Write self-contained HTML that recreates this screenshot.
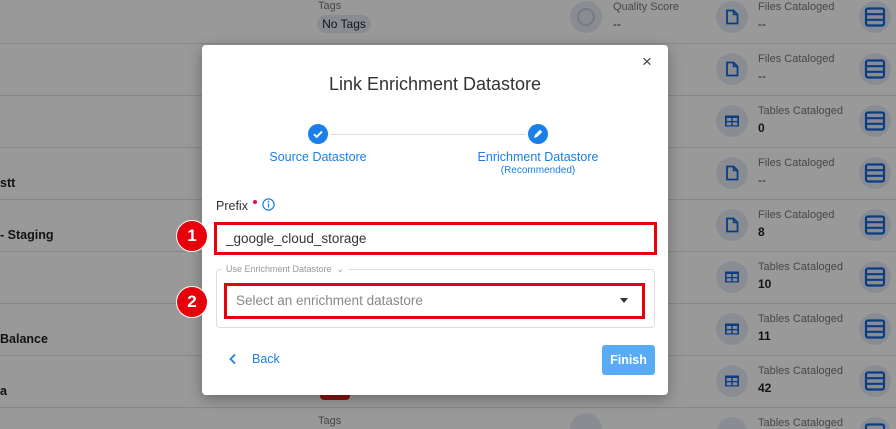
<!DOCTYPE html>
<html><head><meta charset="utf-8"><style>
*{box-sizing:border-box;margin:0;padding:0}
html,body{width:896px;height:429px;overflow:hidden}
body{background:#fff;font-family:"Liberation Sans",sans-serif;position:relative}
.abs{position:absolute}
.line{position:absolute;left:0;width:896px;height:1px;background:#e2e2e2}
.circ{position:absolute;width:32px;height:32px;border-radius:50%;background:#e4ecf6}
.lbl{position:absolute;font-size:11px;color:#777;white-space:nowrap}
.val{position:absolute;font-size:12px;color:#222;font-weight:bold;white-space:nowrap}
.dash{position:absolute;font-size:12px;color:#333;white-space:nowrap}
.name{position:absolute;left:0;font-size:12.5px;color:#1e1e1e;font-weight:bold}
.ov{position:absolute;left:0;top:0;width:896px;height:429px;background:rgba(0,0,0,0.4)}
.modal{position:absolute;left:202px;top:45px;width:466px;height:350px;background:#fff;border-radius:4px;box-shadow:0 4px 14px rgba(0,0,0,.3)}
.red{border:3px solid #e8000b}
.badge{position:absolute;width:32px;height:32px;border-radius:50%;background:#e8000b;color:#fff;font-size:17px;font-weight:bold;text-align:center;line-height:30px;border:1px solid #fff}
</style></head><body>
<div class="line" style="top:43px"></div><div class="line" style="top:95px"></div><div class="line" style="top:147px"></div><div class="line" style="top:199px"></div><div class="line" style="top:251px"></div><div class="line" style="top:303px"></div><div class="line" style="top:355px"></div><div class="line" style="top:407px"></div>
<div class="lbl" style="left:318px;top:0px">Tags</div>
<div class="abs" style="left:317px;top:15px;width:54px;height:18px;border-radius:9px;background:#e4ecf6;font-size:12px;color:#222;text-align:center;line-height:18px">No Tags</div>
<div class="circ" style="left:570px;top:1px"></div><div class="abs" style="left:577px;top:8px;width:18px;height:18px;border-radius:50%;border:2px solid #ccc"></div>
<div class="lbl" style="left:613px;top:1px">Quality Score</div><div class="dash" style="left:613px;top:17px">--</div>
<div class="lbl" style="left:318px;top:415px">Tags</div>
<div class="circ" style="left:570px;top:413px"></div>
<div class="abs" style="left:320px;top:392px;width:30px;height:8px;background:#e02020;border-radius:0 0 4px 4px"></div>
<div class="name" style="top:176px">stt</div>
<div class="name" style="top:228px">- Staging</div>
<div class="name" style="top:332px">Balance</div>
<div class="name" style="top:384px">a</div>

<!-- rows -->
<div class="circ" style="left:716px;top:1px"></div><svg class="abs" style="left:724px;top:9px" width="16" height="16" viewBox="0 0 16 16"><path d="M3 1.5h6.5l4 4v9h-10.5z" fill="none" stroke="#1565d8" stroke-width="1.8"/><path d="M9.5 1.5v4h4" fill="none" stroke="#1565d8" stroke-width="1.5"/></svg><div class="lbl" style="left:758px;top:1px">Files Cataloged</div><div class="dash" style="left:758px;top:17px">--</div>
<div class="circ" style="left:716px;top:53px"></div><svg class="abs" style="left:724px;top:61px" width="16" height="16" viewBox="0 0 16 16"><path d="M3 1.5h6.5l4 4v9h-10.5z" fill="none" stroke="#1565d8" stroke-width="1.8"/><path d="M9.5 1.5v4h4" fill="none" stroke="#1565d8" stroke-width="1.5"/></svg><div class="lbl" style="left:758px;top:53px">Files Cataloged</div><div class="dash" style="left:758px;top:69px">--</div>
<div class="circ" style="left:716px;top:105px"></div><svg class="abs" style="left:724px;top:113px" width="16" height="16" viewBox="0 0 16 16"><rect x="1" y="2.5" width="14" height="11" fill="#1565d8"/><rect x="2.7" y="5" width="4.6" height="3" fill="#e4ecf6"/><rect x="8.7" y="5" width="4.6" height="3" fill="#e4ecf6"/><rect x="2.7" y="9.3" width="4.6" height="3" fill="#e4ecf6"/><rect x="8.7" y="9.3" width="4.6" height="3" fill="#e4ecf6"/></svg><div class="lbl" style="left:758px;top:105px">Tables Cataloged</div><div class="val" style="left:758px;top:121px">0</div>
<div class="circ" style="left:716px;top:157px"></div><svg class="abs" style="left:724px;top:165px" width="16" height="16" viewBox="0 0 16 16"><path d="M3 1.5h6.5l4 4v9h-10.5z" fill="none" stroke="#1565d8" stroke-width="1.8"/><path d="M9.5 1.5v4h4" fill="none" stroke="#1565d8" stroke-width="1.5"/></svg><div class="lbl" style="left:758px;top:157px">Files Cataloged</div><div class="dash" style="left:758px;top:173px">--</div>
<div class="circ" style="left:716px;top:209px"></div><svg class="abs" style="left:724px;top:217px" width="16" height="16" viewBox="0 0 16 16"><path d="M3 1.5h6.5l4 4v9h-10.5z" fill="none" stroke="#1565d8" stroke-width="1.8"/><path d="M9.5 1.5v4h4" fill="none" stroke="#1565d8" stroke-width="1.5"/></svg><div class="lbl" style="left:758px;top:209px">Files Cataloged</div><div class="val" style="left:758px;top:225px">8</div>
<div class="circ" style="left:716px;top:261px"></div><svg class="abs" style="left:724px;top:269px" width="16" height="16" viewBox="0 0 16 16"><rect x="1" y="2.5" width="14" height="11" fill="#1565d8"/><rect x="2.7" y="5" width="4.6" height="3" fill="#e4ecf6"/><rect x="8.7" y="5" width="4.6" height="3" fill="#e4ecf6"/><rect x="2.7" y="9.3" width="4.6" height="3" fill="#e4ecf6"/><rect x="8.7" y="9.3" width="4.6" height="3" fill="#e4ecf6"/></svg><div class="lbl" style="left:758px;top:261px">Tables Cataloged</div><div class="val" style="left:758px;top:277px">10</div>
<div class="circ" style="left:716px;top:313px"></div><svg class="abs" style="left:724px;top:321px" width="16" height="16" viewBox="0 0 16 16"><rect x="1" y="2.5" width="14" height="11" fill="#1565d8"/><rect x="2.7" y="5" width="4.6" height="3" fill="#e4ecf6"/><rect x="8.7" y="5" width="4.6" height="3" fill="#e4ecf6"/><rect x="2.7" y="9.3" width="4.6" height="3" fill="#e4ecf6"/><rect x="8.7" y="9.3" width="4.6" height="3" fill="#e4ecf6"/></svg><div class="lbl" style="left:758px;top:313px">Tables Cataloged</div><div class="val" style="left:758px;top:329px">11</div>
<div class="circ" style="left:716px;top:365px"></div><svg class="abs" style="left:724px;top:373px" width="16" height="16" viewBox="0 0 16 16"><rect x="1" y="2.5" width="14" height="11" fill="#1565d8"/><rect x="2.7" y="5" width="4.6" height="3" fill="#e4ecf6"/><rect x="8.7" y="5" width="4.6" height="3" fill="#e4ecf6"/><rect x="2.7" y="9.3" width="4.6" height="3" fill="#e4ecf6"/><rect x="8.7" y="9.3" width="4.6" height="3" fill="#e4ecf6"/></svg><div class="lbl" style="left:758px;top:365px">Tables Cataloged</div><div class="val" style="left:758px;top:381px">42</div>
<div class="circ" style="left:716px;top:417px"></div><div class="lbl" style="left:758px;top:417px">Tables Cataloged</div>

<div class="circ" style="left:859px;top:1px"></div><div class="circ" style="left:859px;top:53px"></div><div class="circ" style="left:859px;top:105px"></div><div class="circ" style="left:859px;top:157px"></div><div class="circ" style="left:859px;top:209px"></div><div class="circ" style="left:859px;top:261px"></div><div class="circ" style="left:859px;top:313px"></div><div class="circ" style="left:859px;top:365px"></div><div class="circ" style="left:859px;top:417px"></div>
<svg class="abs" style="left:864px;top:0" width="22" height="429" viewBox="0 0 22 429">
<g fill="none" stroke="#1565d8" stroke-width="2.2">
<g transform="translate(0,6)"><rect x="2" y="2.5" width="18" height="17" rx="2"/><path d="M2 8.2h18M2 13.8h18"/></g>
<g transform="translate(0,58)"><rect x="2" y="2.5" width="18" height="17" rx="2"/><path d="M2 8.2h18M2 13.8h18"/></g>
<g transform="translate(0,110)"><rect x="2" y="2.5" width="18" height="17" rx="2"/><path d="M2 8.2h18M2 13.8h18"/></g>
<g transform="translate(0,162)"><rect x="2" y="2.5" width="18" height="17" rx="2"/><path d="M2 8.2h18M2 13.8h18"/></g>
<g transform="translate(0,214)"><rect x="2" y="2.5" width="18" height="17" rx="2"/><path d="M2 8.2h18M2 13.8h18"/></g>
<g transform="translate(0,266)"><rect x="2" y="2.5" width="18" height="17" rx="2"/><path d="M2 8.2h18M2 13.8h18"/></g>
<g transform="translate(0,318)"><rect x="2" y="2.5" width="18" height="17" rx="2"/><path d="M2 8.2h18M2 13.8h18"/></g>
<g transform="translate(0,370)"><rect x="2" y="2.5" width="18" height="17" rx="2"/><path d="M2 8.2h18M2 13.8h18"/></g>
<g transform="translate(0,422)"><rect x="2" y="2.5" width="18" height="17" rx="2"/></g>
</g></svg>

<div class="ov"></div>
<div class="modal">
<div class="abs" style="left:440px;top:7px;font-size:17px;color:#444">×</div>
<div class="abs" style="left:0;width:466px;top:29px;text-align:center;font-size:18px;color:#333">Link Enrichment Datastore</div>
<div class="abs" style="left:128px;top:89px;width:196px;height:1px;background:#ddd"></div>
<svg class="abs" style="left:106px;top:79px" width="20" height="20" viewBox="0 0 20 20"><circle cx="10" cy="10" r="10" fill="#1a7fe8"/><path d="M6 10.3l2.7 2.6 5.3-5.3" fill="none" stroke="#fff" stroke-width="2"/></svg>
<svg class="abs" style="left:326px;top:79px" width="20" height="20" viewBox="0 0 20 20"><circle cx="10" cy="10" r="10" fill="#1a7fe8"/><path d="M6 14l1-3.2 5-5 2.2 2.2-5 5z" fill="#fff"/></svg>
<div class="abs" style="left:16px;width:200px;top:105px;text-align:center;font-size:12.5px;color:#1a7fe8">Source Datastore</div>
<div class="abs" style="left:236px;width:200px;top:105px;text-align:center;font-size:12.5px;color:#1a7fe8">Enrichment Datastore</div>
<div class="abs" style="left:236px;width:200px;top:120px;text-align:center;font-size:10px;color:#1a7fe8">(Recommended)</div>
<div class="abs" style="left:14px;top:154px;font-size:12.5px;color:#333">Prefix</div>
<div class="abs" style="left:51px;top:155px;width:4px;height:4px;border-radius:50%;background:#e0105a"></div>
<svg class="abs" style="left:60px;top:153px" width="13" height="13" viewBox="0 0 13 13"><circle cx="6.5" cy="6.5" r="5.6" fill="none" stroke="#1a7fe8" stroke-width="1.2"/><path d="M6.5 5.5v4" stroke="#1a7fe8" stroke-width="1.3"/><circle cx="6.5" cy="3.7" r=".8" fill="#1a7fe8"/></svg>
<div class="abs red" style="left:12px;top:177px;width:443px;height:33px"></div>
<div class="abs" style="left:24px;top:186px;font-size:13.5px;color:#333">_google_cloud_storage</div>
<div class="abs" style="left:14px;top:224px;width:439px;height:59px;border:1px solid #ddd;border-radius:4px"></div>
<div class="abs" style="left:20px;top:219px;padding:0 4px;background:#fff;font-size:9px;color:#999">Use Enrichment Datastore &nbsp;⌄</div>
<div class="abs red" style="left:22px;top:238px;width:421px;height:36px"></div>
<div class="abs" style="left:34px;top:248px;font-size:13.5px;color:#888">Select an enrichment datastore</div>
<div class="abs" style="left:418px;top:253px;border:4px solid transparent;border-top:5px solid #333;border-bottom:0"></div>
<svg class="abs" style="left:26px;top:308px" width="10" height="12" viewBox="0 0 10 12"><path d="M7 1.5l-4.5 4.5 4.5 4.5" fill="none" stroke="#1a7fe8" stroke-width="1.8"/></svg>
<div class="abs" style="left:50px;top:307px;font-size:12.5px;color:#1a7fe8">Back</div>
<div class="abs" style="left:400px;top:300px;width:53px;height:30px;border-radius:3px;background:#5aabf5;color:#fff;font-weight:bold;font-size:12.5px;text-align:center;line-height:30px">Finish</div>
</div>
<div class="badge" style="left:176px;top:220px">1</div>
<div class="badge" style="left:176px;top:286px">2</div>
</body></html>
